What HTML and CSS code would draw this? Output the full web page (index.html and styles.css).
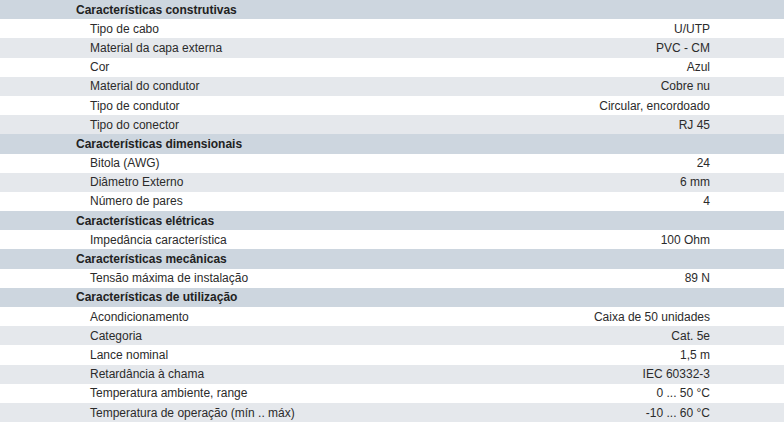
FILE: index.html
```html
<!DOCTYPE html>
<html lang="pt">
<head>
<meta charset="utf-8">
<link rel="stylesheet" href="styles.css">
</head>
<body>
<div class="spec">
  <div class="row head"><span>Características construtivas</span></div>
  <div class="row"><span>Tipo de cabo</span><span>U/UTP</span></div>
  <div class="row alt"><span>Material da capa externa</span><span>PVC - CM</span></div>
  <div class="row"><span>Cor</span><span>Azul</span></div>
  <div class="row alt"><span>Material do condutor</span><span>Cobre nu</span></div>
  <div class="row"><span>Tipo de condutor</span><span>Circular, encordoado</span></div>
  <div class="row alt"><span>Tipo do conector</span><span>RJ 45</span></div>
  <div class="row head"><span>Características dimensionais</span></div>
  <div class="row"><span>Bitola (AWG)</span><span>24</span></div>
  <div class="row alt"><span>Diâmetro Externo</span><span>6 mm</span></div>
  <div class="row"><span>Número de pares</span><span>4</span></div>
  <div class="row head"><span>Características elétricas</span></div>
  <div class="row"><span>Impedância característica</span><span>100 Ohm</span></div>
  <div class="row head"><span>Características mecânicas</span></div>
  <div class="row"><span>Tensão máxima de instalação</span><span>89 N</span></div>
  <div class="row head"><span>Características de utilização</span></div>
  <div class="row"><span>Acondicionamento</span><span>Caixa de 50 unidades</span></div>
  <div class="row alt"><span>Categoria</span><span>Cat. 5e</span></div>
  <div class="row"><span>Lance nominal</span><span>1,5 m</span></div>
  <div class="row alt"><span>Retardância à chama</span><span>IEC 60332-3</span></div>
  <div class="row"><span>Temperatura ambiente, range</span><span>0 ... 50 °C</span></div>
  <div class="row alt"><span>Temperatura de operação (mín .. máx)</span><span>-10 ... 60 °C</span></div>
</div>
</body>
</html>
```
FILE: styles.css
```css
html, body {
  margin: 0;
  padding: 0;
  background: #ffffff;
}
body {
  font-family: "Liberation Sans", Arial, sans-serif;
  font-size: 12px;
  color: #2b2b2b;
}
.spec {
  display: flex;
  flex-direction: column;
  width: 784px;
}
.row {
  height: 19.2px;
  display: flex;
  align-items: center;
  justify-content: space-between;
  padding: 0 74px 0 90px;
  background: #ffffff;
  box-sizing: border-box;
}
.row.alt {
  background: #e5e8ec;
}
.row.head {
  background: #cdd6df;
  padding-left: 76px;
  font-weight: bold;
  color: #222;
}
```
